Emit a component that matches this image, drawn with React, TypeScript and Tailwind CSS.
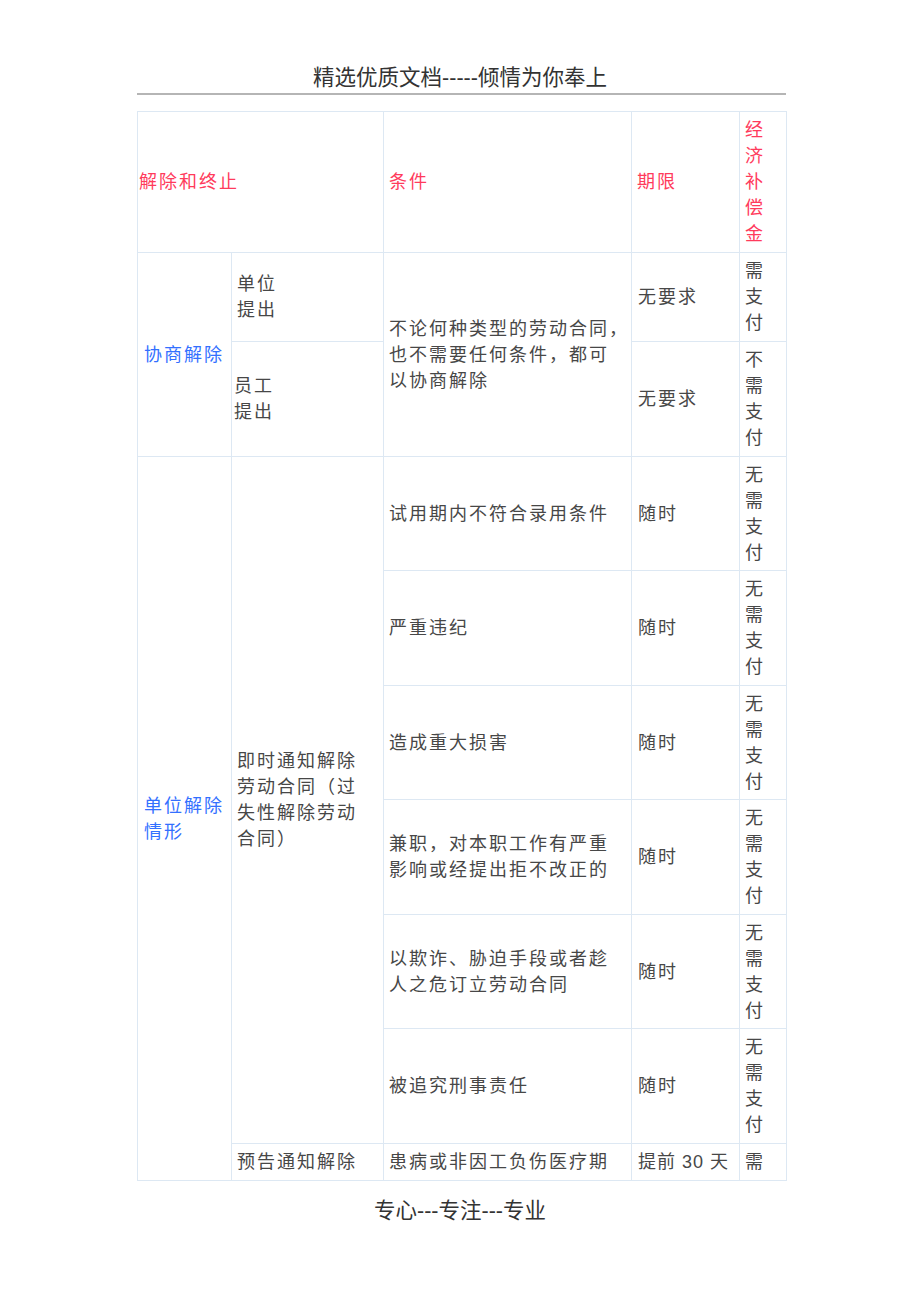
const font = "font-['Liberation_Sans','Noto_Sans_CJK_SC',sans-serif]";

// one-char-per-line text for the narrow last column
function Stack({ text }: { text: string }) {
  return (
    <>
      {text.split("").map((ch, i) => (
        <div key={i}>{ch}</div>
      ))}
    </>
  );
}

const cell = "border border-[#dde8f3] align-middle px-[5px] py-[4px] whitespace-nowrap";

// [condition lines, period] for the instant-notice rows
const INSTANT: [string[], string][] = [
  [["试用期内不符合录用条件"], "随时"],
  [["严重违纪"], "随时"],
  [["造成重大损害"], "随时"],
  [["兼职，对本职工作有严重", "影响或经提出拒不改正的"], "随时"],
  [["以欺诈、胁迫手段或者趁", "人之危订立劳动合同"], "随时"],
  [["被追究刑事责任"], "随时"],
];

export default function App() {
  return (
    <div className={`${font} w-[920px] min-h-[1302px] bg-white pt-[63px]`}>
      <div className="text-center text-[21.5px] leading-[30px] text-[#333]">精选优质文档-----倾情为你奉上</div>
      <div className="ml-[137px] w-[649px] h-[2px] bg-[#b5b5b5]" />

      <div className="ml-[137px] mt-[16px]">
        <table className="w-[649px] table-fixed border-collapse text-[18px] leading-[26px] tracking-[2px] text-[#474747]">
          <colgroup>
            <col className="w-[94px]" />
            <col className="w-[152px]" />
            <col className="w-[248px]" />
            <col className="w-[108px]" />
            <col className="w-[47px]" />
          </colgroup>
          <tbody>
            <tr className="h-[141px] text-[#ff3b5c]">
              <td colSpan={2} className={`${cell} pl-[1px]`}>解除和终止</td>
              <td className={cell}>条件</td>
              <td className={cell}>期限</td>
              <td className={cell}><Stack text="经济补偿金" /></td>
            </tr>

            <tr className="h-[89px]">
              <td rowSpan={2} className={`${cell} pl-[6px] text-[#3370ff]`}>协商解除</td>
              <td className={cell}>单位<br />提出</td>
              <td rowSpan={2} className={cell}>
                不论何种类型的劳动合同，<br />也不需要任何条件，都可<br />以协商解除
              </td>
              <td className={`${cell} pl-[6px]`}>无要求</td>
              <td className={cell}><Stack text="需支付" /></td>
            </tr>
            <tr className="h-[115px]">
              <td className={`${cell} pl-[2px]`}>员工<br />提出</td>
              <td className={`${cell} pl-[6px]`}>无要求</td>
              <td className={cell}><Stack text="不需支付" /></td>
            </tr>

            {INSTANT.map(([lines, period], i) => (
              <tr key={i} className={i % 2 === 0 ? "h-[114px]" : "h-[115px]"}>
                {i === 0 && (
                  <>
                    <td rowSpan={7} className={`${cell} pl-[6px] text-[#3370ff]`}>单位解除<br />情形</td>
                    <td rowSpan={6} className={cell}>
                      即时通知解除<br />劳动合同（过<br />失性解除劳动<br />合同）
                    </td>
                  </>
                )}
                <td className={cell}>
                  {lines.map((l, j) => (
                    <div key={j}>{l}</div>
                  ))}
                </td>
                <td className={`${cell} pl-[6px]`}>{period}</td>
                <td className={cell}><Stack text="无需支付" /></td>
              </tr>
            ))}

            <tr className="h-[37px]">
              <td className={cell}>预告通知解除</td>
              <td className={cell}>患病或非因工负伤医疗期</td>
              <td className={`${cell} pl-[6px] tracking-[1px]`}>提前 30 天</td>
              <td className={cell}>需</td>
            </tr>
          </tbody>
        </table>
      </div>

      <div className="mt-[15px] text-center text-[21.5px] leading-[30px] text-[#333]">专心---专注---专业</div>
    </div>
  );
}
